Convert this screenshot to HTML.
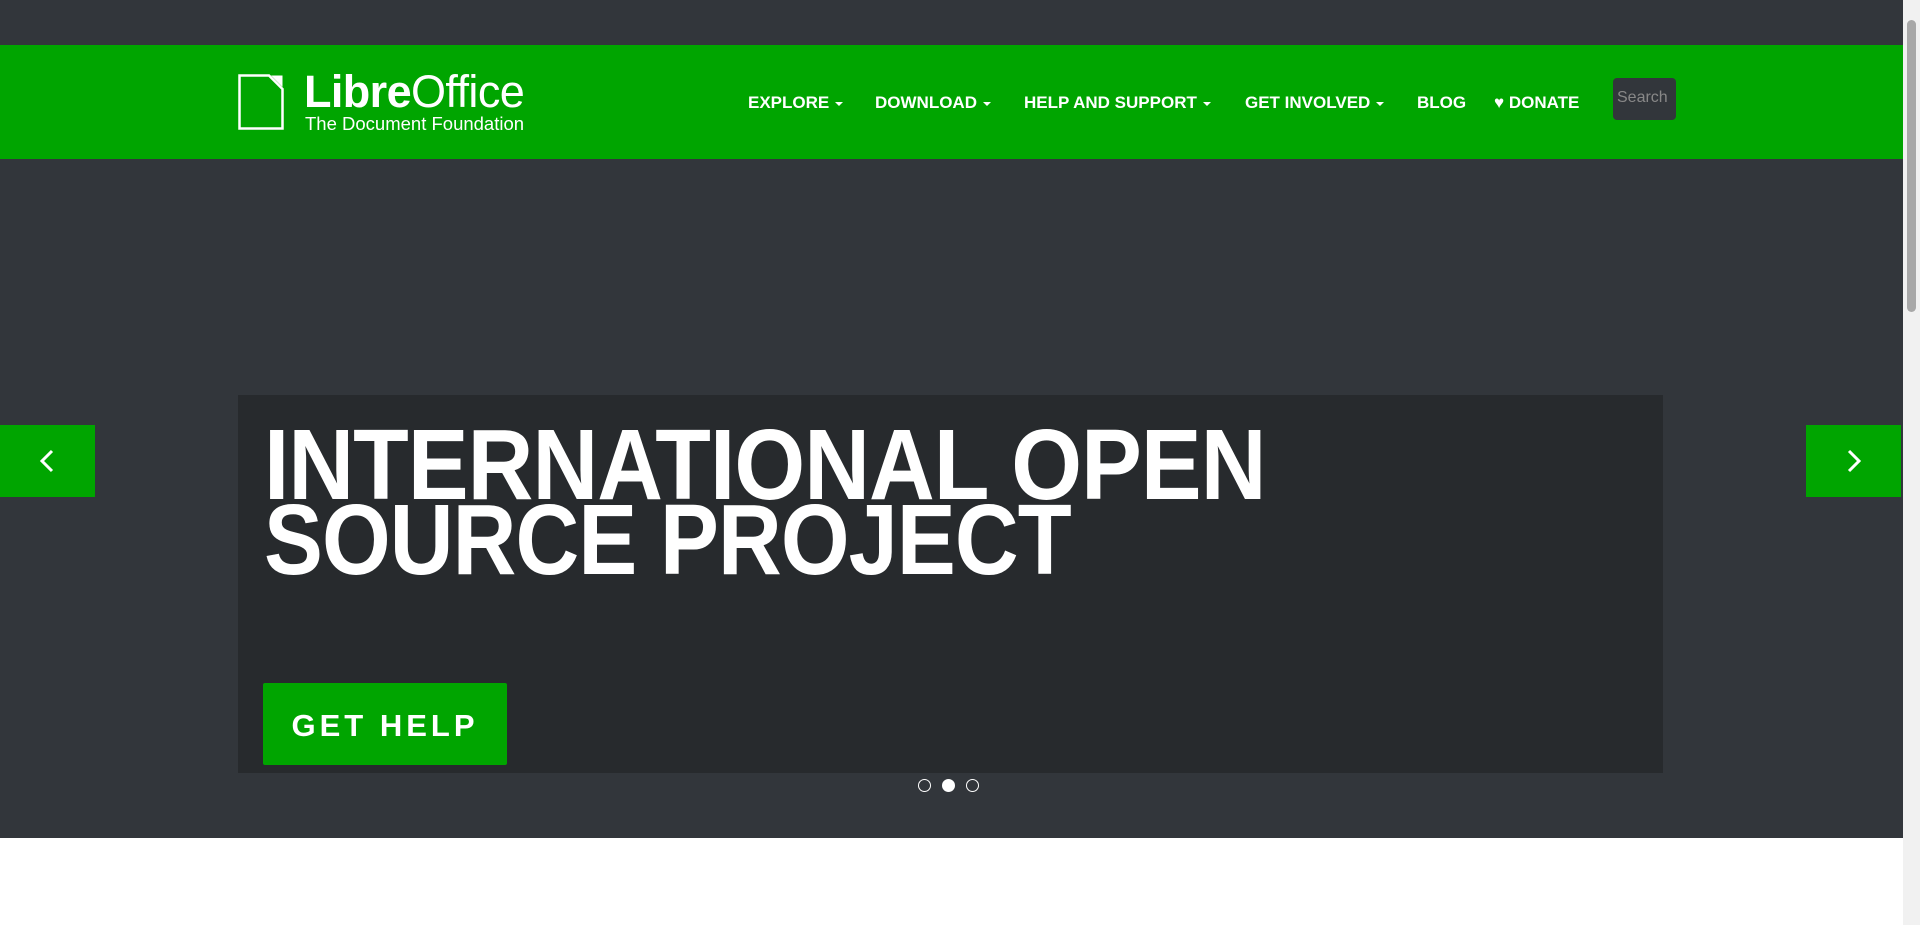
<!DOCTYPE html>
<html><head><meta charset="utf-8"><style>
*{margin:0;padding:0;box-sizing:border-box}
html,body{width:1920px;height:925px;overflow:hidden;background:#fff;font-family:"Liberation Sans",sans-serif}
.top{position:absolute;left:0;top:0;width:1903px;height:45px;background:#32363b}
.nav{position:absolute;left:0;top:45px;width:1903px;height:114px;background:#00a500}
.hero{position:absolute;left:0;top:159px;width:1903px;height:679px;background:#32363b}
.sb{position:absolute;left:1903px;top:0;width:17px;height:925px;background:#f1f1f1}
.sb .th{position:absolute;left:4px;top:20px;width:9px;height:292px;background:#a8a8a8;border-radius:5px}
.n{position:absolute;top:93px;color:#fff;font-weight:bold;font-size:17px;white-space:nowrap;font-family:"Liberation Sans Narrow","Liberation Sans",sans-serif}
.c{display:inline-block;width:0;height:0;border-left:4px solid transparent;border-right:4px solid transparent;border-top:4px solid #fff;vertical-align:middle;margin-left:6px}
.search{position:absolute;left:1613px;top:78px;width:63px;height:42px;background:#32363b;border-radius:4px;color:#888;font-size:16px;padding:11px 4px}
.box{position:absolute;left:238px;top:395px;width:1425px;height:378px;background:#272a2d}
.t{position:absolute;left:264px;top:428px;color:#fff;font-weight:bold;font-size:100px;line-height:75px;white-space:nowrap;transform-origin:0 0;transform:scaleX(0.91);letter-spacing:-1px}
.t span{display:inline-block;transform-origin:0 0;transform:scaleX(0.97)}
.btn{position:absolute;left:263px;top:683px;width:244px;height:82px;background:#00a500;border-radius:2px;color:#fff;font-weight:bold;font-size:31px;letter-spacing:4px;text-align:center;line-height:86px}
.ar{position:absolute;top:425px;width:95px;height:72px;background:#00a500}
.dot{position:absolute;top:779px;width:13px;height:13px;border:1.5px solid #fff;border-radius:50%}
</style></head><body>
<div class="top"></div>
<div class="nav"></div>
<div class="hero"></div>
<svg style="position:absolute;left:238px;top:74px" width="46" height="56" viewBox="0 0 46 56"><path d="M1.5 1.5H31L44.5 15V54.5H1.5Z" fill="none" stroke="#fff" stroke-width="2.5"/><path d="M33 1.5H44.5V13Z" fill="#fff"/></svg>
<div style="position:absolute;left:304px;top:66px;color:#fff;font-size:45px;letter-spacing:-0.6px;white-space:nowrap"><b>Libre</b>Office</div>
<div style="position:absolute;left:305px;top:113px;color:#fff;font-size:18.5px;white-space:nowrap">The Document Foundation</div>
<div class="n" style="left:748px">EXPLORE<span class="c"></span></div>
<div class="n" style="left:875px">DOWNLOAD<span class="c"></span></div>
<div class="n" style="left:1024px">HELP AND SUPPORT<span class="c"></span></div>
<div class="n" style="left:1245px">GET INVOLVED<span class="c"></span></div>
<div class="n" style="left:1417px">BLOG</div>
<div class="n" style="left:1494px">♥ DONATE</div>
<div class="search">Search</div>
<div class="box"></div>
<div class="t">INTERNATIONAL OPEN<br><span>SOURCE PROJECT</span></div>
<div class="btn">GET HELP</div>
<div class="ar" style="left:0"><svg width="95" height="72"><path d="M52 26L42 36L52 46" fill="none" stroke="#fff" stroke-width="3"/></svg></div>
<div class="ar" style="left:1806px"><svg width="95" height="72"><path d="M43 26L53 36L43 46" fill="none" stroke="#fff" stroke-width="3"/></svg></div>
<div class="dot" style="left:918px"></div>
<div class="dot" style="left:942px;background:#fff"></div>
<div class="dot" style="left:966px"></div>
<div class="sb"><div class="th"></div></div>
</body></html>
